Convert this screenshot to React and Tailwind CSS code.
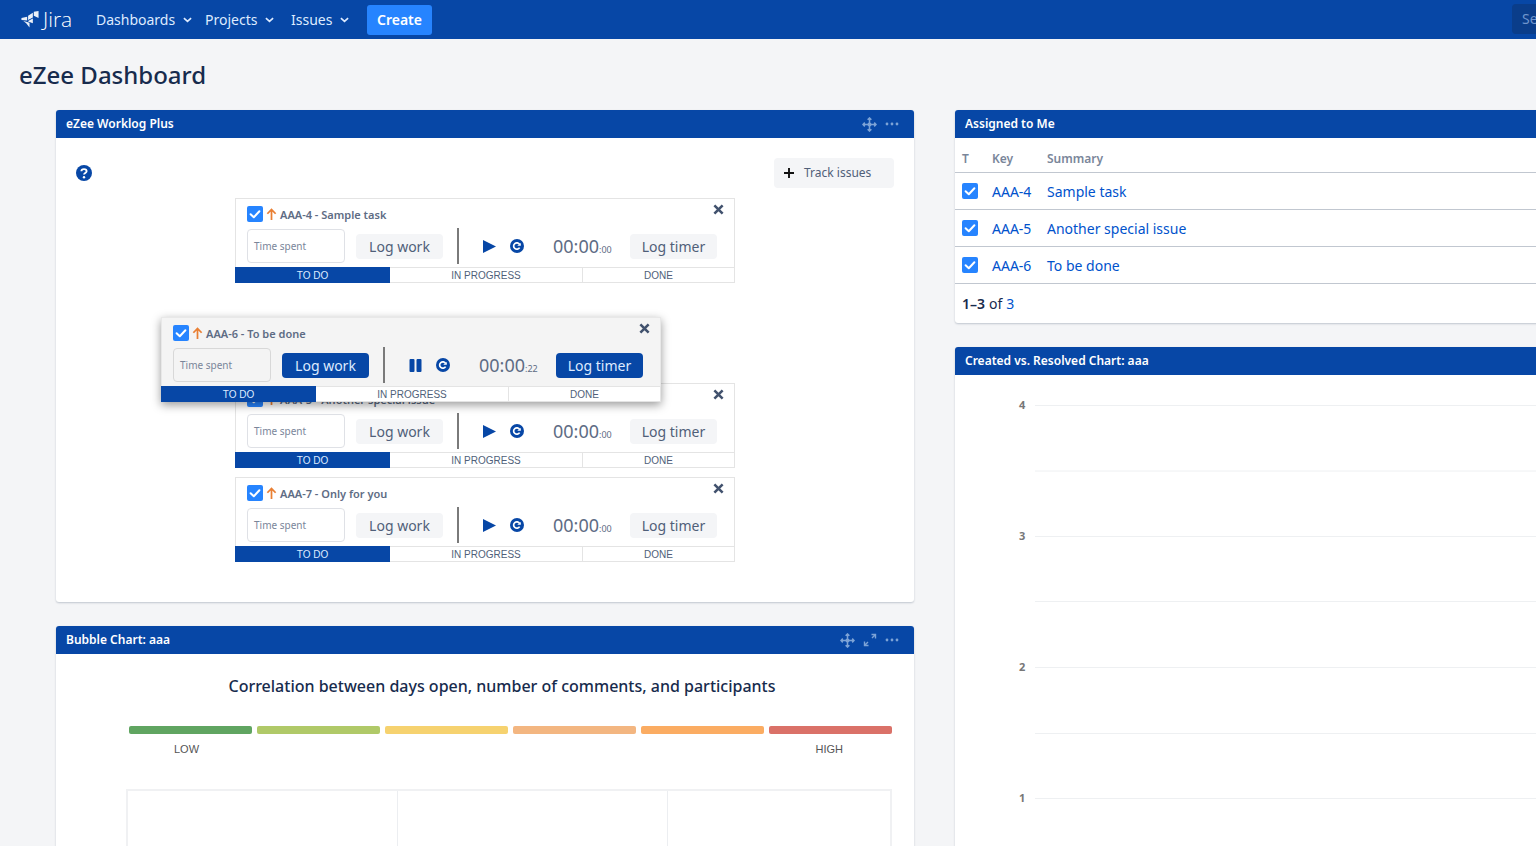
import React from "react";

const Check = ({ cls = "" }) => (
  <svg viewBox="0 0 16 16" className={"w-4 h-4 shrink-0 " + cls}>
    <rect width="16" height="16" rx="2" fill="#2684ff" />
    <path d="M3.6 8.2 L6.8 11.2 L12.4 5.2" fill="none" stroke="#fff" strokeWidth="2" strokeLinecap="round" strokeLinejoin="round" />
  </svg>
);

const Up = () => (
  <svg viewBox="0 0 12 14" className="w-[11px] h-[13px] shrink-0">
    <path d="M6 13 V2 M1.5 6.2 L6 1.5 L10.5 6.2" fill="none" stroke="#e97f33" strokeWidth="1.9" />
  </svg>
);

const Close = () => (
  <svg viewBox="0 0 12 12" className="w-[11px] h-[11px]">
    <path d="M1.5 1.5 L10.5 10.5 M10.5 1.5 L1.5 10.5" stroke="#42526e" strokeWidth="2.8" />
  </svg>
);

const Redo = () => (
  <svg viewBox="0 0 14 14" className="w-[14px] h-[14px]">
    <circle cx="7" cy="7" r="7" fill="#0747a6" />
    <path d="M9.6 5.4 A3.2 3.2 0 1 0 9.6 8.6" fill="none" stroke="#fff" strokeWidth="1.7" />
    <path d="M7.2 6.8 H10.8 V4 Z" fill="#fff" />
  </svg>
);

const MoveIcon = () => (
  <svg viewBox="0 0 16 16" className="w-[15px] h-[15px]">
    <path d="M8 1 V15 M1 8 H15 M6 3 L8 1 L10 3 M6 13 L8 15 L10 13 M3 6 L1 8 L3 10 M13 6 L15 8 L13 10" fill="none" stroke="#7da3d6" strokeWidth="1.6" />
    <circle cx="8" cy="8" r="2.2" fill="#7da3d6" />
  </svg>
);

const Dots = () => (
  <svg viewBox="0 0 14 4" className="w-[14px] h-1">
    <circle cx="2" cy="2" r="1.4" fill="#7da3d6" />
    <circle cx="7" cy="2" r="1.4" fill="#7da3d6" />
    <circle cx="12" cy="2" r="1.4" fill="#7da3d6" />
  </svg>
);

const Expand = () => (
  <svg viewBox="0 0 14 14" className="w-[14px] h-[14px]">
    <path d="M8.5 1.5 H12.5 V5.5 M12.5 1.5 L9 5 M1.5 8.5 V12.5 H5.5 M1.5 12.5 L5 9" fill="none" stroke="#7da3d6" strokeWidth="1.4" />
  </svg>
);

const Chevron = () => (
  <svg viewBox="0 0 10 6" className="w-[9px] h-[6px] ml-2">
    <path d="M1 1 L5 4.6 L9 1" fill="none" stroke="#deebff" strokeWidth="1.8" />
  </svg>
);

function Worklog({ title, seconds = "00", active = false, floating = false }) {
  const btn = active
    ? "bg-[#0747a6] text-[#deebff]"
    : "bg-[#f4f5f7] text-[#505f79]";
  return (
    <div className={(floating ? "bg-[#f4f4f4] border-[#e8e8e8] " : "bg-white border-[#e4e4e4] ") + "w-[500px] border-t border-x relative"}>
      <div className="flex items-center h-[29px] pl-[11px] pt-[1px]">
        <Check />
        <span className="ml-[3px]"><Up /></span>
        <span className="ml-[3px] text-[11px] font-semibold text-[#5e6c84] leading-none">{title}</span>
      </div>
      <div className="absolute right-[10px] top-[5px]"><Close /></div>
      <div className="flex items-center h-[36px] pl-[11px]">
        <div className={(floating ? "border-[#d8d8d8] " : "border-[#dfe1e6] ") + "w-[98px] h-[34px] border rounded-[4px] flex items-center pl-[6px] text-[10px] text-[#7a869a]"}>Time spent</div>
        <div className={"ml-[11px] w-[87px] h-[25px] rounded-[4px] flex items-center justify-center text-[14px] " + btn}>Log work</div>
        <div className="ml-[14px] w-[2px] h-[36px] bg-[#7a7a7a]" />
        <div className="ml-[22px] w-[16px] flex justify-center">
          {active ? (
            <svg viewBox="0 0 13 13" className="w-[13px] h-[13px]">
              <rect width="5" height="13" x="0.5" rx="1" fill="#0747a6" />
              <rect width="5" height="13" x="7.5" rx="1" fill="#0747a6" />
            </svg>
          ) : (
            <svg viewBox="0 0 13 13" className="w-[13px] h-[13px]"><path d="M0 0 L13 6.5 L0 13 Z" fill="#0747a6" /></svg>
          )}
        </div>
        <div className="ml-[13px]"><Redo /></div>
        <div className="ml-[29px] w-[77px] flex items-baseline text-[#5e6c84]">
          <span className="text-[18px] leading-none">00:00</span>
          <span className="text-[9px] leading-none">:{seconds}</span>
        </div>
        <div className={"w-[87px] h-[25px] rounded-[4px] flex items-center justify-center text-[14px] " + btn}>Log timer</div>
      </div>
      <div className="-mx-px mt-[3px] flex h-[16px] font-['Liberation_Sans',sans-serif] text-[10px] text-[#505f79]">
        <div className="w-[155px] bg-[#0747a6] text-[#deebff] flex items-center justify-center">TO DO</div>
        <div className={(floating ? "bg-white " : "") + "w-[193px] border-y border-r border-[#e4e4e4] flex items-center justify-center"}>IN PROGRESS</div>
        <div className={(floating ? "bg-white " : "") + "w-[152px] border-y border-r border-[#e4e4e4] flex items-center justify-center"}>DONE</div>
      </div>
    </div>
  );
}

function PanelHead({ title, children }) {
  return (
    <div className="h-[28px] bg-[#0747a6] rounded-t-[3px] flex items-center justify-between px-[10px] text-white">
      <span className="text-[12px] font-semibold">{title}</span>
      <div className="flex items-center gap-[8px] pr-[5px]">{children}</div>
    </div>
  );
}

const rows = [
  ["AAA-4", "Sample task"],
  ["AAA-5", "Another special issue"],
  ["AAA-6", "To be done"],
];

const legend = ["#60a561", "#b0c968", "#f6d26f", "#f3b681", "#fbac62", "#da7168"];

export default function App() {
  return (
    <div className="h-screen w-full overflow-hidden bg-[#f4f5f7] font-['Noto_Sans',sans-serif] text-[#172b4d]">
      <nav className="h-[39px] bg-[#0747a6] flex items-center relative text-[14px] text-[#deebff]">
        <div className="ml-[20px] flex items-center w-[76px] text-white">
          <svg viewBox="0 0 20 20" className="w-[20px] h-[19px]">
            <path d="M19 1 V8.5 L14 6 V1.8 Z M13 3 V8 L8 10.5 V6 Z M1 8.5 L7 7 V11 L1 10.5 Z M8 11.5 L13 9 V14 L8 12 Z M3 11.5 L7 12.5 L9.5 13.5 V18.5 L6 14 Z" fill="#fff" fillOpacity="0.92" />
          </svg>
          <span className="ml-[3px] font-['Open_Sans',sans-serif] font-light text-[21px] leading-none">Jira</span>
        </div>
        <div className="flex items-center w-[109px]">Dashboards<Chevron /></div>
        <div className="flex items-center w-[86px]">Projects<Chevron /></div>
        <div className="flex items-center w-[76px]">Issues<Chevron /></div>
        <div className="h-[30px] w-[65px] rounded-[3px] bg-[#2684ff] text-white font-semibold flex items-center justify-center">Create</div>
        <div className="absolute right-0 top-[4px] w-[24px] h-[30px] rounded-l-[4px] bg-[#0a3d8a] pl-[10px] pt-[4px] text-[14px] text-[#6f95cd] overflow-hidden whitespace-nowrap">Se</div>
      </nav>

      <h1 className="h-[71px] pl-[19px] flex items-center text-[24px] font-medium text-[#172b4d]">eZee Dashboard</h1>

      <div className="flex gap-[41px] pl-[56px]">
        <div className="w-[858px] shrink-0 flex flex-col gap-[24px]">
          <section className="bg-white rounded-[3px] shadow-[0_1px_2px_rgba(9,30,66,0.22)] h-[492px]">
            <PanelHead title="eZee Worklog Plus"><MoveIcon /><Dots /></PanelHead>
            <div className="relative pt-[20px]">
              <div className="flex justify-between pl-[20px] pr-[20px]">
                <svg viewBox="0 0 16 16" className="w-4 h-4 mt-[7px]">
                  <circle cx="8" cy="8" r="8" fill="#0747a6" />
                  <path d="M5.4 6.2 C5.4 3.4 10.6 3.4 10.6 6.2 C10.6 8 8 8 8 9.6" fill="none" stroke="#fff" strokeWidth="1.9" />
                  <circle cx="8" cy="12.2" r="1.2" fill="#fff" />
                </svg>
                <div className="w-[120px] h-[30px] rounded-[4px] bg-[#f4f5f7] flex items-center pl-[10px] text-[12px] text-[#505f79]">
                  <svg viewBox="0 0 10 10" className="w-[10px] h-[10px]"><path d="M5 0 V10 M0 5 H10" stroke="#111" strokeWidth="1.9" /></svg>
                  <span className="ml-[10px]">Track issues</span>
                </div>
              </div>
              <div className="relative ml-[179px] mt-[10px] w-[500px] flex flex-col">
                <Worklog title="AAA-4 - Sample task" />
                <div className="mt-[100px]"><Worklog title="AAA-5 - Another special issue" /></div>
                <div className="mt-[9px]"><Worklog title="AAA-7 - Only for you" /></div>
                <div className="absolute left-[-74px] top-[119px] shadow-[0_3px_9px_rgba(0,0,0,0.4)]">
                  <Worklog title="AAA-6 - To be done" seconds="22" active floating />
                </div>
              </div>
            </div>
          </section>

          <section className="bg-white rounded-[3px] shadow-[0_1px_2px_rgba(9,30,66,0.22)] h-[400px]">
            <PanelHead title="Bubble Chart: aaa"><MoveIcon /><Expand /><Dots /></PanelHead>
            <div className="pl-[70px] pr-[22px]">
              <h2 className="h-[64px] flex items-center justify-center pl-[-6px] text-[16px] font-medium pr-[14px]">Correlation between days open, number of comments, and participants</h2>
              <div className="mt-[8px] ml-[3px] flex gap-[5px]">
                {legend.map((c) => (
                  <div key={c} className="w-[123px] h-2 rounded-[2px]" style={{ backgroundColor: c }} />
                ))}
              </div>
              <div className="ml-[48px] mr-[49px] mt-[7px] flex justify-between font-['Liberation_Sans',sans-serif] text-[11px] text-[#555]">
                <span>LOW</span><span>HIGH</span>
              </div>
              <div className="mt-[31px] h-[100px] grid grid-cols-[270px_270px_1fr] border-2 border-[#f0f1f3]">
                <div className="border-r border-[#eceef1]" />
                <div className="border-r border-[#eceef1]" />
                <div />
              </div>
            </div>
          </section>
        </div>

        <div className="w-[858px] shrink-0 flex flex-col gap-[24px]">
          <section className="bg-white rounded-[3px] shadow-[0_1px_2px_rgba(9,30,66,0.22)] h-[213px]">
            <PanelHead title="Assigned to Me" />
            <div className="h-[35px] border-b border-[#c1c7d0] grid grid-cols-[30px_55px_1fr] pl-[7px] items-center pt-[8px] text-[12px] font-semibold text-[#7a869a]">
              <span>T</span><span>Key</span><span>Summary</span>
            </div>
            {rows.map(([k, s]) => (
              <div key={k} className="h-[37px] border-b border-[#c1c7d0] grid grid-cols-[30px_55px_1fr] pl-[7px] items-center text-[14px] text-[#0052cc]">
                <Check />
                <span>{k}</span>
                <span>{s}</span>
              </div>
            ))}
            <div className="h-[39px] pl-[7px] flex items-center text-[14px]">
              <span className="font-semibold">1–3</span><span className="ml-1">of</span><span className="ml-1 text-[#0052cc]">3</span>
            </div>
          </section>

          <section className="bg-white rounded-[3px] shadow-[0_1px_2px_rgba(9,30,66,0.22)] h-[600px]">
            <PanelHead title="Created vs. Resolved Chart: aaa" />
            <svg viewBox="0 0 858 471" className="w-[858px] h-[471px] block">
              {[30, 95.5, 161, 226, 292, 358, 423].map((y) => (
                <line key={y} x1="80" x2="858" y1={y + 0.5} y2={y + 0.5} stroke="#eef0f2" />
              ))}
              {[[4, 30], [3, 161], [2, 292], [1, 423]].map(([n, y]) => (
                <text key={n} x="64" y={y + 4} fontSize="11" fontWeight="700" fill="#777" fontFamily="Noto Sans">{n}</text>
              ))}
            </svg>
          </section>
        </div>
      </div>
    </div>
  );
}
